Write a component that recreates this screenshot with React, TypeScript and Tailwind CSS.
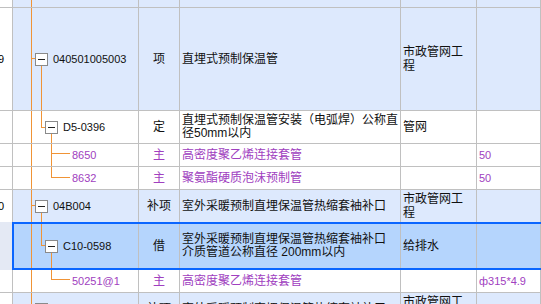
import type { ReactNode } from 'react'

const cols = 'grid grid-cols-[13px_126px_41px_221px_76px_1fr]'
const cell = 'flex items-center border-r border-b border-[#c0c0c0] overflow-hidden'
const line = 'absolute bg-[#f09436]'

function Box() {
  return (
    <span className="relative z-10 h-[13px] w-[13px] shrink-0 border border-[#8a8a8a] bg-white">
      <span className="absolute left-[2px] top-[5px] h-px w-[7px] bg-[#222]" />
    </span>
  )
}

function Row({
  h,
  bg,
  no,
  tree,
  code,
  type,
  name,
  unit,
  extra,
  purple,
  sel,
}: {
  h: string
  bg: string
  no?: string
  tree: ReactNode
  code?: ReactNode
  type?: string
  name?: ReactNode
  unit?: ReactNode
  extra?: string
  purple?: boolean
  sel?: boolean
}) {
  const color = purple ? 'text-[#a040c0]' : 'text-[#111]'
  const c = sel ? cell.replace('border-b ', '') : cell
  return (
    <div className={`${cols} ${h} ${sel ? 'relative -mt-px' : ''}`}>
      <div className={`${c} justify-end pr-[8px] whitespace-nowrap text-[11px] ${sel ? 'bg-[#e4e9f4]' : 'bg-white'}`}>
        {no}
      </div>
      <div className={`${c} relative ${bg} ${color}`}>
        {tree}
        {code}
      </div>
      <div className={`${c} justify-center ${bg} ${color}`}>{type}</div>
      <div className={`${c} pl-[2px] leading-[13px] ${bg} ${color}`}>{name}</div>
      <div className={`${c} pl-[2px] pr-[3px] leading-[14px] ${bg} ${color}`}>{unit}</div>
      <div className={`${c} pl-[2px] text-[11px] ${bg} ${color}`}>{extra}</div>
      {sel && (
        <div className="pointer-events-none absolute left-[12px] right-0 top-0 bottom-0 border-y-2 border-l-2 border-[#0a66ff]" />
      )}
    </div>
  )
}

const blue = 'bg-[#dde9fd]'
const white = 'bg-white'

export default function App() {
  return (
    <div
      className="h-[304px] w-[541px] overflow-hidden bg-white text-[12px]"
      style={{ fontFamily: '"Liberation Sans", "Noto Sans CJK SC", sans-serif' }}
    >
      <Row h="h-[8px]" bg={blue} tree={<span className={`${line} left-[18px] top-0 -bottom-px w-px`} />} />

      <Row
        h="h-[103px]"
        bg={blue}
        no="139"
        tree={
          <>
            <span className={`${line} left-[18px] top-0 -bottom-px w-px`} />
            <span className={`${line} left-[18px] top-[50px] h-px w-[4px]`} />
            <span className={`${line} left-[28px] top-[57px] -bottom-px w-px`} />
          </>
        }
        code={
          <div className="flex items-center gap-[5px] pl-[22px] text-[11px]">
            <Box />
            <span>040501005003</span>
          </div>
        }
        type="项"
        name="直埋式预制保温管"
        unit="市政管网工程"
      />

      <Row
        h="h-[33px]"
        bg={white}
        tree={
          <>
            <span className={`${line} left-[18px] top-0 -bottom-px w-px`} />
            <span className={`${line} left-[28px] top-0 h-[16px] w-px`} />
            <span className={`${line} left-[28px] top-[16px] h-px w-[4px]`} />
            <span className={`${line} left-[38px] top-[23px] -bottom-px w-px`} />
          </>
        }
        code={
          <div className="flex items-center gap-[5px] pl-[32px] text-[11px]">
            <Box />
            <span>D5-0396</span>
          </div>
        }
        type="定"
        name={
          <span>
            直埋式预制保温管安装（电弧焊）公称直
            <br />
            径50mm以内
          </span>
        }
        unit="管网"
      />

      <Row
        h="h-[23px]"
        bg={white}
        purple
        tree={
          <>
            <span className={`${line} left-[18px] top-0 -bottom-px w-px`} />
            <span className={`${line} left-[38px] top-0 -bottom-px w-px`} />
            <span className={`${line} left-[38px] top-[9px] h-px w-[19px]`} />
          </>
        }
        code={<span className="pl-[59px] text-[11px]">8650</span>}
        type="主"
        name="高密度聚乙烯连接套管"
        extra="50"
      />

      <Row
        h="h-[23px]"
        bg={white}
        purple
        tree={
          <>
            <span className={`${line} left-[18px] top-0 -bottom-px w-px`} />
            <span className={`${line} left-[38px] top-0 h-[10px] w-px`} />
            <span className={`${line} left-[38px] top-[10px] h-px w-[19px]`} />
          </>
        }
        code={<span className="pl-[59px] text-[11px]">8632</span>}
        type="主"
        name="聚氨酯硬质泡沫预制管"
        extra="50"
      />

      <Row
        h="h-[33px]"
        bg={blue}
        no="140"
        tree={
          <>
            <span className={`${line} left-[18px] top-0 -bottom-px w-px`} />
            <span className={`${line} left-[18px] top-[15px] h-px w-[4px]`} />
            <span className={`${line} left-[28px] top-[22px] -bottom-px w-px`} />
          </>
        }
        code={
          <div className="flex items-center gap-[5px] pl-[22px] text-[11px]">
            <Box />
            <span>04B004</span>
          </div>
        }
        type="补项"
        name="室外采暖预制直埋保温管热缩套袖补口"
        unit="市政管网工程"
      />

      <Row
        h="h-[48px]"
        bg="bg-[#b5d5fd]"
        sel
        tree={
          <>
            <span className={`${line} left-[18px] top-0 bottom-0 w-px`} />
            <span className={`${line} left-[28px] top-0 h-[23px] w-px`} />
            <span className={`${line} left-[28px] top-[23px] h-px w-[4px]`} />
            <span className={`${line} left-[38px] top-[30px] bottom-0 w-px`} />
          </>
        }
        code={
          <div className="flex items-center gap-[5px] pl-[32px] text-[11px]">
            <Box />
            <span>C10-0598</span>
          </div>
        }
        type="借"
        name={
          <span>
            室外采暖预制直埋保温管热缩套袖补口
            <br />
            介质管道公称直径 200mm以内
          </span>
        }
        unit="给排水"
      />

      <Row
        h="h-[23px]"
        bg={white}
        purple
        tree={
          <>
            <span className={`${line} left-[18px] top-0 -bottom-px w-px`} />
            <span className={`${line} left-[38px] top-0 h-[9px] w-px`} />
            <span className={`${line} left-[38px] top-[9px] h-px w-[19px]`} />
          </>
        }
        code={<span className="pl-[59px] text-[11px]">50251@1</span>}
        type="主"
        name="高密度聚乙烯连接套管"
        extra="ф315*4.9"
      />

      <Row
        h="h-[33px]"
        bg={blue}
        no="141"
        tree={
          <>
            <span className={`${line} left-[18px] top-0 -bottom-px w-px`} />
            <span className={`${line} left-[18px] top-[15px] h-px w-[4px]`} />
            <span className={`${line} left-[28px] top-[22px] -bottom-px w-px`} />
          </>
        }
        code={
          <div className="flex items-center gap-[5px] pl-[22px] text-[11px]">
            <Box />
            <span>04B005</span>
          </div>
        }
        type="补项"
        name="室外采暖预制直埋保温管热缩套袖补口"
        unit="市政管网工程"
      />
    </div>
  )
}
